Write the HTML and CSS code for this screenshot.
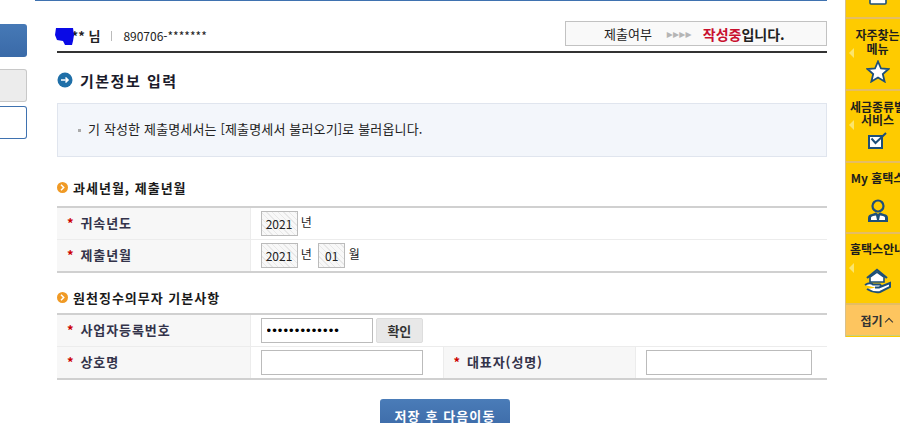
FILE: index.html
```html
<!DOCTYPE html>
<html lang="ko">

<head>
  <meta charset="UTF-8">
  <title>기본정보 입력</title>
  <link rel="stylesheet" href="styles.css">
</head>

<body>
  <div class="page">
    <!-- 왼쪽 메뉴 (잘린 부분) -->
    <div class="side">
      <div class="side_btn blue"></div>
      <div class="side_btn gray"></div>
      <div class="side_btn line"></div>
    </div>

    <div class="main">
      <div class="user_bar">
        <div class="user">
          <span class="user_name">*** 님</span>
          <span class="user_sep"></span>
          <span class="user_no">890706-*******</span>
          <svg class="blot" width="20" height="20" viewBox="0 0 20 20">
            <path d="M1 1 L18 1 L19 8 L18 14 L17 18 L10 18 L8 14 L2 13 L0 8 Z" fill="#0a0ae6" />
          </svg>
        </div>
        <div class="status">
          <span>제출여부</span>
          <span class="arrows">▸▸▸▸</span>
          <b><em>작성중</em>입니다.</b>
        </div>
      </div>

      <h2 class="title">
        <svg width="16" height="16" viewBox="0 0 16 16">
          <circle cx="8" cy="8" r="7.5" fill="#1f6fa8" />
          <path d="M4 8 H11 M8.5 5.5 L11 8 L8.5 10.5" stroke="#fff" stroke-width="1.6" fill="none" />
        </svg>
        기본정보 입력
      </h2>

      <div class="info"><span class="dot"></span>기 작성한 제출명세서는 [제출명세서 불러오기]로 불러옵니다.</div>

      <h3 class="sub first">
        <svg width="11" height="11" viewBox="0 0 11 11">
          <circle cx="5.5" cy="5.5" r="5.5" fill="#f09a25" />
          <path d="M4 2.8 L6.7 5.5 L4 8.2" stroke="#fff" stroke-width="1.5" fill="none" />
        </svg>
        과세년월, 제출년월
      </h3>
      <table class="form">
        <colgroup>
          <col class="c1"><col class="c2"><col class="c3"><col class="c4">
        </colgroup>
        <tr>
          <th><i>*</i>귀속년도</th>
          <td colspan="3"><span class="ro y">2021</span> 년</td>
        </tr>
        <tr>
          <th><i>*</i>제출년월</th>
          <td colspan="3"><span class="ro y">2021</span> 년 <span class="ro m">01</span> 월</td>
        </tr>
      </table>

      <h3 class="sub">
        <svg width="11" height="11" viewBox="0 0 11 11">
          <circle cx="5.5" cy="5.5" r="5.5" fill="#f09a25" />
          <path d="M4 2.8 L6.7 5.5 L4 8.2" stroke="#fff" stroke-width="1.5" fill="none" />
        </svg>
        원천징수의무자 기본사항
      </h3>
      <table class="form">
        <colgroup>
          <col class="c1"><col class="c2"><col class="c3"><col class="c4">
        </colgroup>
        <tr>
          <th><i>*</i>사업자등록번호</th>
          <td colspan="3" class="biz">
            <input class="inp no" type="password" value="1234567890123">
            <button class="check" type="button">확인</button>
          </td>
        </tr>
        <tr>
          <th><i>*</i>상호명</th>
          <td><input class="inp name" type="text"></td>
          <th><i>*</i>대표자(성명)</th>
          <td><input class="inp ceo" type="text"></td>
        </tr>
      </table>

      <div class="btns"><button class="save" type="button">저장 후 다음이동</button></div>
    </div>

    <!-- 오른쪽 퀵메뉴 -->
    <div class="rail">
      <div class="rail_item top">
        <svg width="20" height="5" viewBox="0 0 20 5">
          <path d="M2 0 V3 Q2 4 3 4 H17 Q18 4 18 3 V0" fill="#fff" stroke="#1d4f7a" stroke-width="1.6" />
        </svg>
      </div>
      <div class="rail_item h72 arrow">
        <p class="two">자주찾는<br>메뉴</p>
        <svg width="24" height="23" viewBox="0 0 24 23">
          <path d="M12 1.5 L15 8.5 L22.5 9 L16.8 14 L18.6 21.5 L12 17.5 L5.4 21.5 L7.2 14 L1.5 9 L9 8.5 Z" fill="#fff" stroke="#1d4f7a" stroke-width="1.8" />
        </svg>
      </div>
      <div class="rail_item h72 arrow">
        <p>세금종류별<br>서비스</p>
        <svg width="20" height="17" viewBox="0 0 20 17">
          <rect x="1" y="4" width="13" height="12" fill="#fff" stroke="#1d4f7a" stroke-width="2" />
          <path d="M3.5 6.5 L7.5 11 L18 1" stroke="#1d4f7a" stroke-width="2" fill="none" />
        </svg>
      </div>
      <div class="rail_item h71">
        <p class="one">My 홈택스</p>
        <svg width="24" height="24" viewBox="0 0 24 24">
          <circle cx="12" cy="7" r="5.5" fill="none" stroke="#1d4f7a" stroke-width="2.2" />
          <path d="M2 23 V19 Q2 15.5 6 15 L10 13.5 L12 15 L14 13.5 L18 15 Q22 15.5 22 19 V23 Z" fill="#1d4f7a" />
          <path d="M5 20 V18.5 Q5 17.5 7 17 L10 16.5 L11 21 H5 Z M19 20 V18.5 Q19 17.5 17 17 L14 16.5 L13 21 H19 Z" fill="#fff" />
        </svg>
      </div>
      <div class="rail_item h71 arrow">
        <p class="one house">홈택스안내</p>
        <svg width="28" height="26" viewBox="0 0 28 26">
          <path d="M3 10 L13 2 L23 10" fill="none" stroke="#1d4f7a" stroke-width="2.2" />
          <path d="M6 9 L13 4 L20 9 V14 H6 Z" fill="#fff" stroke="#1d4f7a" stroke-width="1.6" />
          <path d="M1 17 Q6 14 9 16.5 H16 Q18 18 15 19.5 H11 M16 19 L26 15 V19 L16 24 Q9 25 3 21" fill="#fff" stroke="#1d4f7a" stroke-width="2" />
        </svg>
      </div>
      <div class="rail_fold">접기<span class="chev"></span></div>
    </div>
  </div>
</body>

</html>
```

FILE: styles.css
```css
html, body {
  margin: 0;
  padding: 0;
  height: 423px;
  overflow: hidden;
  background: #fff;
}

body, input, button {
  font-family: "Noto Sans CJK KR", "Liberation Sans", sans-serif;
  font-size: 12px;
  color: #222;
}

.page {
  display: flex;
  height: 423px;
  overflow: hidden;
}

/* 왼쪽 메뉴 */
.side {
  width: 27px;
  flex: none;
  padding-top: 24px;
}

.side_btn {
  height: 33px;
  box-sizing: border-box;
  border-radius: 0 3px 3px 0;
}

.blue {
  background: linear-gradient(#4679b6, #3a6aa8);
}

.gray {
  margin-top: 12px;
  background: #ececec;
  border: 1px solid #c8c8c8;
  border-left: 0;
}

.line {
  margin-top: 4px;
  border: 1px solid #3f72b0;
  border-left: 0;
}

/* 본문 */
.main {
  width: 792px;
  flex: none;
  margin-left: 8px;
  box-sizing: border-box;
  height: 440px;
  padding-left: 22px;
  border-top: 1px solid #3f72b0;
}

.user_bar {
  display: flex;
  justify-content: space-between;
  align-items: flex-start;
  height: 52px;
  padding-top: 20px;
  box-sizing: border-box;
  border-bottom: 2px solid #333;
}

.user {
  position: relative;
  display: flex;
  align-items: center;
  padding-top: 4px;
  height: 21px;
}

.blot {
  position: absolute;
  left: -2px;
  top: 6px;
}

.user_name {
  font-size: 13px;
  font-weight: bold;
  padding-left: 8px;
}

.user_sep {
  width: 1px;
  height: 10px;
  margin: 0 11px 0 11px;
  background: #bbb;
}

.user_no {
  font-size: 12px;
  letter-spacing: 0;
}

.status {
  display: flex;
  align-items: center;
  width: 262px;
  height: 25px;
  box-sizing: border-box;
  padding-left: 38px;
  font-size: 13px;
  background: #f9f9f9;
  border: 1px solid #c2c2c2;
}

.arrows {
  margin: 0 11px 0 15px;
  color: #b5b5b5;
  font-size: 12px;
  letter-spacing: 0.2px;
  font-family: "DejaVu Sans", sans-serif;
}

.status b {
  font-size: 14px;
}

.status em {
  font-style: normal;
  color: #c8102e;
}

.title {
  display: flex;
  align-items: center;
  gap: 7px;
  margin: 17px 0 13px;
  height: 20px;
  font-size: 15px;
  letter-spacing: 1.5px;
  color: #1b1b2b;
}

.info {
  height: 54px;
  box-sizing: border-box;
  padding-left: 20px;
  font-size: 13px;
  letter-spacing: 0.15px;
  line-height: 50px;
  background: #f3f6fb;
  border: 1px solid #e0e5ee;
}

.dot {
  display: inline-block;
  width: 3px;
  height: 3px;
  margin-right: 7px;
  vertical-align: middle;
  background: #aaa;
}

.sub {
  display: flex;
  align-items: center;
  gap: 5px;
  height: 16px;
  margin: 16px 0 8px;
  font-size: 13px;
  letter-spacing: 1px;
  color: #1a1a1a;
}

.sub.first {
  margin-top: 22px;
  margin-bottom: 11px;
}

.form {
  width: 770px;
  table-layout: fixed;
  border-collapse: collapse;
  border-top: 2px solid #d0d0d0;
  border-bottom: 2px solid #d0d0d0;
}

.c1 {
  width: 193px;
}

.c2 {
  width: 193px;
}

.c3 {
  width: 192px;
}

.c4 {
  width: 192px;
}

.form th, .form td {
  height: 31px;
  padding: 0;
  border-top: 1px solid #ececec;
  text-align: left;
}

.form tr:first-child th, .form tr:first-child td {
  border-top: 0;
}

.form th {
  padding: 0 0 2px 10px;
  box-sizing: border-box;
  font-size: 13px;
  letter-spacing: 0.9px;
  color: #33334a;
  background: #f7f7f7;
  border-left: 1px solid #ececec;
  border-right: 1px solid #ececec;
}

.form th:first-child {
  border-left: 0;
}

.form i {
  margin-right: 6px;
  font-style: normal;
  color: #c00;
}

.form td {
  padding-left: 10px;
}

.ro {
  display: inline-block;
  box-sizing: border-box;
  height: 25px;
  line-height: 23px;
  text-align: center;
  vertical-align: middle;
  border: 1px solid #bbb;
  background: repeating-linear-gradient(45deg, #f8f8f8, #f8f8f8 3px, #e8e8e8 3px, #e8e8e8 4px);
}

.y {
  width: 37px;
}

.m {
  width: 27px;
  margin-left: 3px;
}

.inp {
  box-sizing: border-box;
  height: 25px;
  margin: 0;
  padding: 0 5px;
  vertical-align: middle;
  background: #fff;
  border: 1px solid #bbb;
}

.no {
  width: 112px;
  font-family: "Liberation Sans", sans-serif;
  font-size: 13px;
  letter-spacing: 1.1px;
  color: #000;
}

.name {
  width: 162px;
}

.ceo {
  width: 166px;
}

.check {
  width: 47px;
  height: 25px;
  margin-left: 0;
  padding: 0;
  font-size: 13px;
  font-weight: bold;
  vertical-align: middle;
  color: #333;
  background: #e8e8e8;
  border: 1px solid #ddd;
  border-radius: 2px;
}

.btns {
  margin-top: 19px;
  padding-left: 6px;
  text-align: center;
}

.save {
  width: 130px;
  height: 30px;
  padding: 2px 0 0;
  font-size: 13px;
  font-weight: bold;
  letter-spacing: 1.1px;
  color: #fff;
  border: 0;
  border-radius: 3px 3px 0 0;
  background: linear-gradient(#4a7cb8, #3d6ba8);
}

/* 오른쪽 퀵메뉴 */
.rail {
  width: 55px;
  flex: none;
  margin-left: 18px;
  height: 337px;
  box-sizing: border-box;
  overflow: hidden;
  background: #fecb00;
  border-left: 1px solid #d9c08a;
}

/* 메뉴 폭이 창보다 넓어서 오른쪽이 잘린다 */
.rail_item {
  position: relative;
  width: 63px;
  box-sizing: border-box;
  text-align: center;
  border-bottom: 2px solid #e5bd62;
  overflow: hidden;
}

.top {
  height: 19px;
  line-height: 0;
}

.h72 {
  height: 72px;
}

.h71 {
  height: 71px;
}

.rail_item p {
  margin: 9px 0 0;
  height: 27px;
  font-size: 12px;
  font-weight: bold;
  line-height: 13px;
  white-space: nowrap;
  color: #1d1d1d;
}

.rail_item p.two {
  line-height: 14px;
}

.rail_item svg {
  display: block;
  margin: 5px auto 0;
}

.top svg {
  margin-top: 0;
}

.rail_item p.one {
  height: 14px;
  margin-top: 8px;
  margin-bottom: 14px;
}

.rail_item p.house {
  margin-bottom: 12px;
}

.arrow::before {
  content: "";
  position: absolute;
  left: 3px;
  top: 29px;
  border-style: solid;
  border-width: 5px 5px 5px 0;
  border-color: transparent #fbe56d transparent transparent;
}

.rail_fold {
  display: flex;
  align-items: center;
  justify-content: center;
  gap: 3px;
  height: 31px;
  padding-left: 6px;
  box-sizing: border-box;
  font-weight: bold;
  font-size: 12px;
  color: #333;
  background: #fdc55f;
  border-bottom: 1px solid #c9cf80;
}

.chev {
  width: 5px;
  height: 5px;
  margin-top: 4px;
  border-top: 1.5px solid #333;
  border-left: 1.5px solid #333;
  transform: rotate(45deg);
}
```
